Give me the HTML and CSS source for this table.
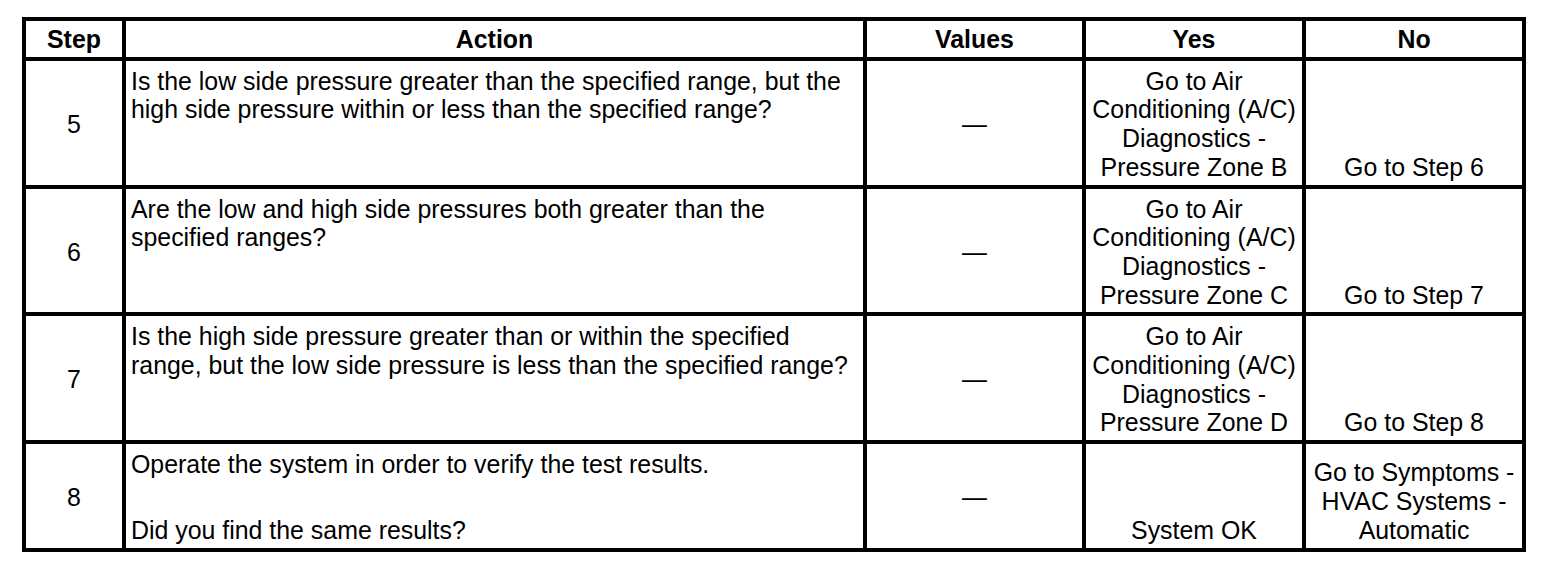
FILE: index.html
```html
<!DOCTYPE html>
<html>
<head>
<meta charset="utf-8">
<link rel="stylesheet" href="styles.css">
</head>
<body>
<div class="wrap">
<table class="diag">
  <colgroup>
    <col class="c-step">
    <col class="c-action">
    <col class="c-values">
    <col class="c-yes">
    <col class="c-no">
  </colgroup>
  <thead>
    <tr>
      <th>Step</th>
      <th>Action</th>
      <th>Values</th>
      <th>Yes</th>
      <th>No</th>
    </tr>
  </thead>
  <tbody>
    <tr class="row">
      <td class="step">5</td>
      <td class="action">Is the low side pressure greater than the specified range, but the high side pressure within or less than the specified range?</td>
      <td class="values">—</td>
      <td class="result">Go to Air<br>Conditioning (A/C)<br>Diagnostics -<br>Pressure Zone B</td>
      <td class="result">Go to Step 6</td>
    </tr>
    <tr class="row">
      <td class="step">6</td>
      <td class="action">Are the low and high side pressures both greater than the specified ranges?</td>
      <td class="values">—</td>
      <td class="result">Go to Air<br>Conditioning (A/C)<br>Diagnostics -<br>Pressure Zone C</td>
      <td class="result">Go to Step 7</td>
    </tr>
    <tr class="row">
      <td class="step">7</td>
      <td class="action">Is the high side pressure greater than or within the specified range, but the low side pressure is less than the specified range?</td>
      <td class="values">—</td>
      <td class="result">Go to Air<br>Conditioning (A/C)<br>Diagnostics -<br>Pressure Zone D</td>
      <td class="result">Go to Step 8</td>
    </tr>
    <tr class="row">
      <td class="step">8</td>
      <td class="action">
        <p class="para">Operate the system in order to verify the test results.</p>
        <p class="para para-gap">Did you find the same results?</p>
      </td>
      <td class="values">—</td>
      <td class="result">System OK</td>
      <td class="result">Go to Symptoms -<br>HVAC Systems -<br>Automatic</td>
    </tr>
  </tbody>
</table>
</div>
</body>
</html>
```

FILE: styles.css
```css
html, body {
  margin: 0;
  padding: 0;
  background: #fff;
}

body {
  font-family: "Liberation Sans", Arial, sans-serif;
  font-size: 24.9px;
  line-height: 28.7px;
  color: #000;
}

.wrap {
  padding: 17px 0 0 22px;
}

.diag {
  border-collapse: collapse;
  border: 4px solid #000;
  table-layout: fixed;
  width: 1504px;
}

.c-step { width: 100px; }
.c-action { width: 741px; }
.c-values { width: 219px; }
.c-yes { width: 220px; }
.c-no { width: 220px; }

.diag th,
.diag td {
  border: 4px solid #000;
  padding: 6px 5px 3px;
}

.diag th {
  font-weight: bold;
  text-align: center;
  vertical-align: middle;
  padding: 4px 2px 3px;
}

.step,
.values {
  text-align: center;
  vertical-align: middle;
}

.action {
  text-align: left;
  vertical-align: top;
}

.result {
  text-align: center;
  vertical-align: bottom;
  padding-left: 2px;
  padding-right: 2px;
}

.para {
  margin: 0;
}

.para-gap {
  margin-top: 37px;
}
```
